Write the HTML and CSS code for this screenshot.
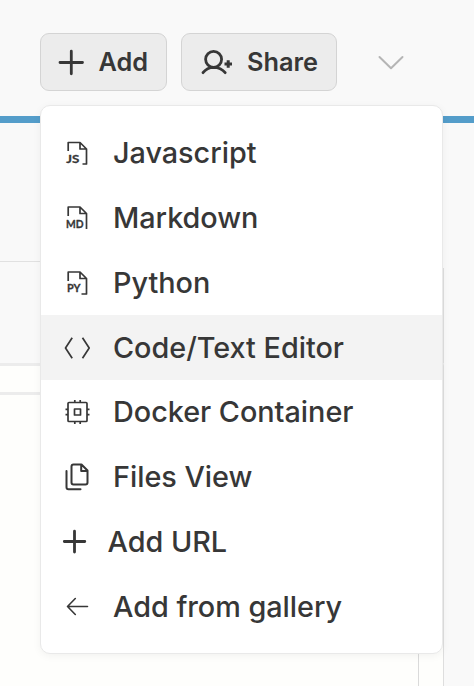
FILE: index.html
```
<!DOCTYPE html>
<html lang="en">
<head>
<meta charset="utf-8">
<title>Add menu</title>
<link rel="stylesheet" href="styles.css">
</head>
<body>
<div class="app">
  <header class="toolbar">
    <button class="btn btn-add"><svg width="28" height="28" viewBox="0 0 28 28" class="ico heavy"><path d="M3 14.500h22.500M14.300 3.200v22.600"/></svg><span>Add</span></button>
    <button class="btn btn-share"><svg width="34" height="28" viewBox="0 0 34 28" class="ico heavy"><circle cx="14.600" cy="11.300" r="8"/><path d="M4 24.700Q8 19.500 14.600 19.300Q22 19.500 26.200 24.700"/><path class="plus" d="M25.500 16h7.500M29.200 12.300v7.500"/></svg><span>Share</span></button>
    <svg width="28" height="18" viewBox="0 0 28 18" class="ico chevron"><path d="M2.500 3l11.500 11.200L25.500 3"/></svg>
  </header>
  <div class="accent"></div>
  <main class="content">
    <div class="head-a"></div>
    <div class="head-b"><div class="edge"></div></div>
    <div class="body-area">
      <div class="left"><div class="strip"></div><div class="pane"></div></div>
      <div class="right"></div>
    </div>
  </main>
  <nav class="menu">
    <a class="item"><svg width="30" height="30" viewBox="0 0 30 30" class="ico file"><path d="M6.200 13V4.500H18L24.500 11V26H20.500M18 4.500V11H24.500"/><text x="4.300" y="25" textLength="13" lengthAdjust="spacingAndGlyphs">JS</text></svg><span>Javascript</span></a>
    <a class="item"><svg width="30" height="30" viewBox="0 0 30 30" class="ico file"><path d="M6.200 13V4H18L24.500 10.500V26M18 4V10.500H24.500"/><text x="4" y="24.500" textLength="17.500" lengthAdjust="spacingAndGlyphs">MD</text></svg><span>Markdown</span></a>
    <a class="item"><svg width="30" height="30" viewBox="0 0 30 30" class="ico file"><path d="M6.200 13V4H18L24.500 10.500V26H19.500M18 4V10.500H24.500"/><text x="5" y="24.300" textLength="13.500" lengthAdjust="spacingAndGlyphs">PY</text></svg><span>Python</span></a>
    <a class="item active"><svg width="30" height="30" viewBox="0 0 30 30" class="ico file"><path d="M10.200 4.700L3.500 15L10.200 25.300M20.500 4.700L27.200 15L20.500 25.300"/></svg><span>Code/Text Editor</span></a>
    <a class="item raised"><svg width="30" height="30" viewBox="0 0 30 30" class="ico file"><rect x="6" y="5.500" width="19" height="19" rx="1"/><rect x="12.500" y="12" width="6" height="6"/><path d="M12.800 5.500V3M18.200 5.500V3M12.800 24.500v2.500M18.200 24.500v2.500M6 12.300h-2.500M6 17.700h-2.500M25 12.300h2.500M25 17.700h2.500"/></svg><span>Docker Container</span></a>
    <a class="item"><svg width="30" height="30" viewBox="0 0 30 30" class="ico mid"><path d="M11.500 2.500H19.500L25.500 8.500V20.500Q25.500 22.500 23.500 22.500H11.500Q9.500 22.500 9.500 20.500V4.500Q9.500 2.500 11.500 2.500ZM19.200 3V9H25.300M4.500 9V25.200Q4.500 27.200 6.500 27.200H18.500"/></svg><span>Files View</span></a>
    <a class="item tight"><svg width="30" height="30" viewBox="0 0 30 30" class="ico heavy"><path d="M5.300 14.500h20.500M15.500 4.200v20.800"/></svg><span>Add URL</span></a>
    <a class="item"><svg width="30" height="30" viewBox="0 0 30 30" class="ico"><path d="M25.500 14.500H5.500M13.300 6.500L5.500 14.500L13.300 22.500"/></svg><span>Add from gallery</span></a>
  </nav>
</div>
</body>
</html>
```
FILE: styles.css
```
* { box-sizing: border-box; }
body {
  margin: 0;
  font-family: Inter, "Liberation Sans", sans-serif;
  color: #373737;
  background: #f9f9f9;
}
.app {
  position: relative;
  display: flex;
  flex-direction: column;
  width: 474px;
  height: 686px;
  overflow: hidden;
}
.toolbar {
  display: flex;
  align-items: flex-start;
  height: 116px;
  padding: 33px 0 0 40px;
}
.btn {
  display: flex;
  align-items: center;
  height: 58px;
  margin: 0;
  border: 1px solid #d4d4d4;
  border-radius: 9px;
  background: #ececec;
  color: inherit;
  font: 600 25.3px/32px Inter, sans-serif;
  white-space: nowrap;
}
.btn-add { width: 127px; margin-right: 14px; padding: 0 0 0 16px; gap: 13.5px; }
.btn-share { width: 156px; padding: 0 0 0 17px; gap: 14px; }
.ico {
  flex: none;
  fill: none;
  stroke: currentColor;
  stroke-width: 1.6;
  stroke-linecap: round;
  stroke-linejoin: round;
}
.ico text {
  fill: currentColor;
  stroke: currentColor;
  stroke-width: .3;
  font: 700 10.5px Lato, sans-serif;
}
.file { stroke-width: 1.7; stroke-linecap: butt; }
.mid { stroke-width: 2; }
.heavy { stroke-width: 2.8; }
.plus { stroke-width: 3; stroke-linecap: butt; }
.chevron { margin: 21px 0 0 40px; color: #b5b5b5; stroke-width: 2; }
.accent { height: 7px; background: #549dca; }
.content { display: flex; flex: 1; flex-direction: column; }
.head-a { width: 443px; height: 139px; border-bottom: 1px solid #e1e1e1; }
.head-b { display: flex; align-items: flex-end; height: 101px; }
.edge { width: 444px; height: 95px; border-right: 1px solid #dedede; }
.body-area { display: flex; flex: 1; }
.left {
  width: 444px;
  border-top: 3px solid #ececec;
  border-right: 1px solid #dedede;
  background: #fefefc;
}
.strip { height: 29px; border-bottom: 3px solid #ececec; }
.pane { width: 419px; height: 291px; border-right: 1px solid #dadada; }
.menu {
  position: absolute;
  top: 105px;
  left: 40px;
  width: 403px;
  height: 549px;
  padding: 15px 0;
  border: 1px solid #e9e9e9;
  border-radius: 10px;
  background: #fff;
  box-shadow: 0 2px 8px rgba(0, 0, 0, .05);
}
.item {
  display: flex;
  align-items: center;
  gap: 21px;
  height: 64.8px;
  padding-left: 21px;
  font-size: 28.8px;
  font-weight: 500;
  letter-spacing: -0.02px;
  white-space: nowrap;
}
.item span { margin-top: -1px; }
.raised { padding-bottom: 1px; }
.tight { gap: 18.5px; padding-left: 18px; }
.active { background: #f3f3f3; }
```
